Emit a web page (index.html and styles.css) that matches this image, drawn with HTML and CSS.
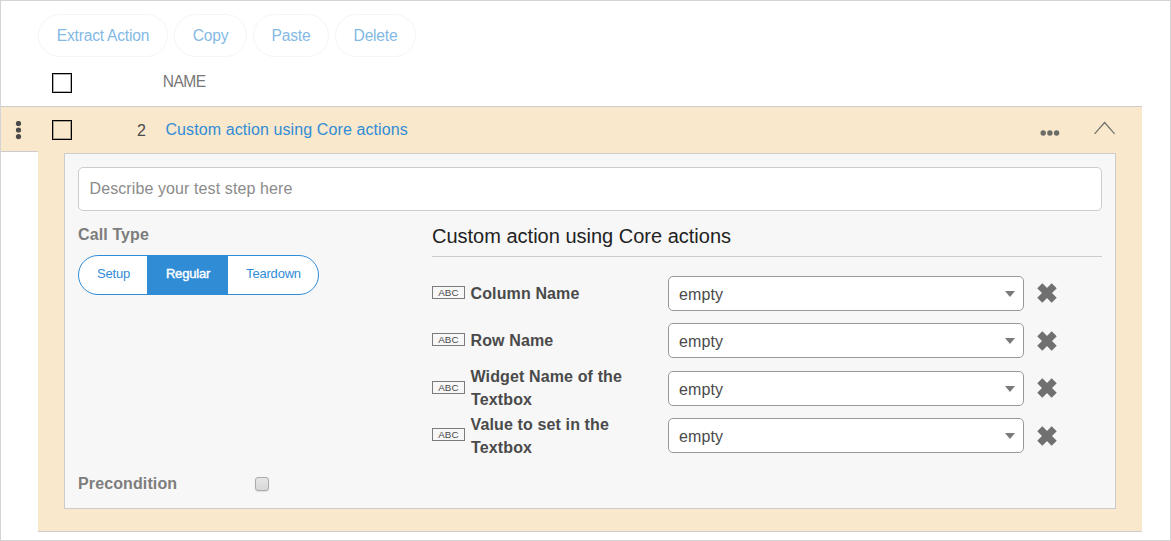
FILE: index.html
```html
<!DOCTYPE html>
<html lang="en">
<head>
<meta charset="utf-8">
<title>Test steps</title>
<link rel="stylesheet" href="styles.css">
</head>
<body>
<main class="frame">
  <div class="toolbar">
    <button class="pill pill-extract">Extract Action</button>
    <button class="pill pill-copy">Copy</button>
    <button class="pill pill-paste">Paste</button>
    <button class="pill pill-delete">Delete</button>
  </div>
  <div class="list-head"><span class="box"></span><span class="list-title">NAME</span></div>
  <section class="step">
    <div class="handle">
      <svg width="7" height="20" viewBox="0 0 7 20" fill="#4a4a4a"><circle cx="3.5" cy="2.5" r="2.6"/><circle cx="3.5" cy="9" r="2.6"/><circle cx="3.5" cy="15.6" r="2.6"/></svg>
    </div>
    <div class="step-main">
      <header class="step-head">
        <span class="box"></span>
        <span class="num">2</span>
        <a class="step-name">Custom action using Core actions</a>
        <svg class="more" width="20" height="6" viewBox="0 0 20 6" fill="#6b6b68"><circle cx="3.2" cy="3" r="2.7"/><circle cx="9.9" cy="3" r="2.7"/><circle cx="16.6" cy="3" r="2.7"/></svg>
        <svg class="collapse" width="22" height="14" viewBox="0 0 22 14" fill="none" stroke="#6f6f6c" stroke-width="1.2"><path d="M.6 12.8 10.6 1.5l10 11.3"/></svg>
      </header>
      <div class="panel">
        <input class="describe" placeholder="Describe your test step here">
        <div class="columns">
          <div class="left">
            <div class="label call-label">Call Type</div>
            <div class="segments"><span class="seg seg-setup">Setup</span><span class="seg seg-on">Regular</span><span class="seg seg-tear">Teardown</span></div>
            <div class="precondition"><span class="label">Precondition</span><span class="check"></span></div>
          </div>
          <div class="right">
            <h2 class="title">Custom action using Core actions</h2>
            <div class="params">
              <div class="param"><span class="abc">ABC</span><span class="pname">Column Name</span><span class="select">empty<i class="caret"></i></span><svg class="remove" width="22" height="22" viewBox="0 0 22 22"><path d="M3.8 3.8 18.2 18.2M18.2 3.8 3.8 18.2"/></svg></div>
              <div class="param"><span class="abc">ABC</span><span class="pname">Row Name</span><span class="select">empty<i class="caret"></i></span><svg class="remove low" width="22" height="22" viewBox="0 0 22 22"><path d="M3.8 3.8 18.2 18.2M18.2 3.8 3.8 18.2"/></svg></div>
              <div class="param tall"><span class="abc">ABC</span><span class="pname">Widget Name of the<br><span class="second">Textbox</span></span><span class="select">empty<i class="caret"></i></span><svg class="remove" width="22" height="22" viewBox="0 0 22 22"><path d="M3.8 3.8 18.2 18.2M18.2 3.8 3.8 18.2"/></svg></div>
              <div class="param last"><span class="abc">ABC</span><span class="pname">Value to set in the<br><span class="second">Textbox</span></span><span class="select">empty<i class="caret"></i></span><svg class="remove low" width="22" height="22" viewBox="0 0 22 22"><path d="M3.8 3.8 18.2 18.2M18.2 3.8 3.8 18.2"/></svg></div>
            </div>
          </div>
        </div>
      </div>
    </div>
  </section>
</main>
</body>
</html>
```

FILE: styles.css
```css
* { box-sizing: border-box; }
body { margin: 0; background: #fff; font-family: "Liberation Sans", Arial, sans-serif; font-size: 16px; color: #4a4a4a; }
svg { display: block; flex: none; }
.frame { width: 1171px; height: 541px; border: 1px solid #d4d4d4; overflow: hidden; }
.toolbar { display: flex; gap: 6px; padding: 13px 0 0 37px; }
.pill { height: 43px; padding: 0; border: 1px solid #f5f5f5; border-radius: 22px; background: #fff; color: #83b9e4; font: 15.6px "Liberation Sans", Arial, sans-serif; letter-spacing: -.22px; }
.pill-extract { width: 130px; }
.pill-copy { width: 73px; }
.pill-paste { width: 76px; }
.pill-delete { width: 81px; }
.list-head { display: flex; height: 49px; padding: 16px 0 0 51px; }
.box { flex: none; width: 20px; height: 20px; border: 1px solid #000; box-shadow: inset 0 0 0 1px rgba(0, 0, 0, .3); }
.list-title { margin-left: 90.7px; font-size: 15.6px; line-height: 18px; color: #777; letter-spacing: -.5px; }
.step { display: flex; width: 1141px; height: 426px; }
.handle { width: 37px; height: 46px; padding: 14px 0 0 14px; background: #f9e8cc; border-top: 1px solid #ccc; border-bottom: 1px solid #ccc; }
.step-main { width: 1104px; padding: 0 26px; background: #f9e8cc; border-top: 1px solid #ccc; border-bottom: 1px solid #ccc; }
.step-head { display: flex; height: 46px; margin-left: -12px; padding-top: 13px; }
.num { width: 9px; margin: 1px 0 0 65px; line-height: 20px; }
.step-name { margin-left: 19.4px; line-height: 19px; color: #318cd6; letter-spacing: .1px; }
.more { margin: 10px 0 0 auto; }
.collapse { margin: 1px 0 0 34px; }
.panel { height: 356px; padding: 13px; background: #f7f7f7; border: 1px solid #ccc; }
.describe { display: block; width: 1024px; height: 44px; padding: 0 10px 1px 10.5px; border: 1px solid #ccc; border-radius: 5px; background: #fff; font: 16px "Liberation Sans", Arial, sans-serif; letter-spacing: .1px; }
.describe::placeholder { color: #8b8b8b; opacity: 1; }
.columns { display: grid; grid-template-columns: 354px 670px; }
.label { font-weight: 700; color: #7d7d7d; letter-spacing: .12px; line-height: 20px; }
.call-label { margin-top: 14px; }
.segments { display: flex; width: 241px; height: 40px; margin-top: 10px; border: 1px solid #318cd6; border-radius: 20px; background: #fff; overflow: hidden; font-size: 13px; line-height: 36px; color: #318cd6; text-align: center; }
.seg { letter-spacing: -.2px; }
.seg-setup { width: 68px; padding-left: 1px; }
.seg-on { width: 81px; padding-left: 1px; background: #318cd6; color: #fff; -webkit-text-stroke: .4px #fff; }
.seg-tear { width: 90px; padding-left: 1px; }
.precondition { display: flex; margin-top: 179px; }
.check { width: 14px; height: 14px; margin: 3px 0 0 78px; border: 1px solid #aaa; border-radius: 3px; background: linear-gradient(#e6e6e6, #d8d8d8); box-shadow: 0 1px 1px #ddd; }
.title { height: 46px; margin: 0; padding-top: 14px; border-bottom: 1px solid #ccc; font-size: 20px; line-height: 23px; font-weight: 400; color: #222; }
.params { padding-top: 19px; }
.param { display: flex; height: 47px; }
.param:nth-child(2) { height: 48px; }
.abc { width: 33px; height: 13px; margin-top: 10px; border: 1px solid #7b7b7b; font-size: 9.8px; line-height: 12px; text-align: center; letter-spacing: .2px; flex: none; }
.pname { width: 197.5px; margin-left: 5.5px; padding-top: 6px; font-weight: 700; line-height: 23px; letter-spacing: .13px; flex: none; }
.tall .pname { margin-top: -12px; }
.last .pname { margin-top: -11px; }
.second { margin-left: .5px; }
.select { display: flex; align-items: center; justify-content: space-between; width: 356px; height: 35px; padding: 2px 8px 0 10px; border: 1px solid #999; border-radius: 5px; background: #fff; letter-spacing: .1px; flex: none; }
.caret { border: 5px solid transparent; border-top: 6px solid #7a7a7a; border-bottom: 0; margin-top: -2px; }
.remove { margin: 6px 0 0 12px; stroke: #707070; stroke-width: 7.2; }
.low { margin-top: 7px; }
```
